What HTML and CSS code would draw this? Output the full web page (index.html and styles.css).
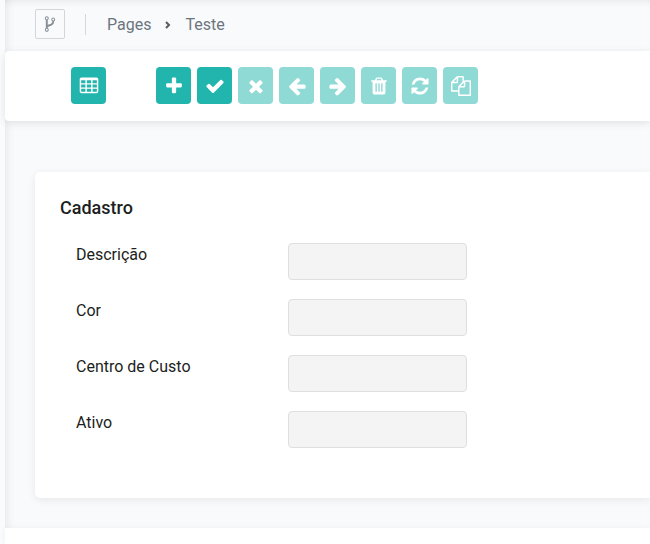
FILE: index.html
```html
<!DOCTYPE html>
<html lang="pt-BR">
<head>
  <meta charset="UTF-8" />
  <meta name="viewport" content="width=device-width, initial-scale=1" />
  <title>Teste</title>
  <link rel="stylesheet" href="styles.css">
</head>
<body>
  <main class="content">
    <header class="page-header">
      <button type="button" class="btn-fork" aria-label="Menu">
        <svg viewBox="0 0 1792 1792"><path d="M672 1472q0-40-28-68t-68-28-68 28-28 68 28 68 68 28 68-28 28-68zm0-1152q0-40-28-68t-68-28-68 28-28 68 28 68 68 28 68-28 28-68zm640 128q0-40-28-68t-68-28-68 28-28 68 28 68 68 28 68-28 28-68zm96 0q0 52-26 96.500t-70 69.500q-2 287-226 414-67 38-203 81-128 40-169.500 71t-41.500 100v26q44 25 70 69.500t26 96.500q0 80-56 136t-136 56-136-56-56-136q0-52 26-96.500t70-69.500v-820q-44-25-70-69.500t-26-96.500q0-80 56-136t136-56 136 56 56 136q0 52-26 96.500t-70 69.500v497q54-26 154-57 55-17 87.500-29.500t70.500-31 59-39.500 40.500-51 28-69.500 8.500-91.500q-44-25-70-69.500t-26-96.500q0-80 56-136t136-56 136 56 56 136z"/></svg>
      </button>
      <nav class="breadcrumb">
        <a href="#">Pages</a>
        <svg class="chevron" viewBox="0 0 10 10"><path d="M3 2l3 3-3 3"/></svg>
        <a href="#">Teste</a>
      </nav>
    </header>

    <div class="toolbar">
      <button type="button" class="btn" aria-label="Tabela">
        <svg viewBox="0 0 1792 1792"><path fill-rule="evenodd" d="M224 128h1344q66 0 113 47t47 113v1088q0 66-47 113t-113 47h-1344q-66 0-113-47t-47-113v-1088q0-66 47-113t113-47zM192 384v256h384v-256zM704 384v256h384v-256zM1216 384v256h384v-256zM192 768v256h384v-256zM704 768v256h384v-256zM1216 768v256h384v-256zM192 1152v224q0 32 32 32h352v-256zM704 1152v256h384v-256zM1216 1152v256h352q32 0 32-32v-224z"/></svg>
      </button>
      <div class="btn-group">
        <button type="button" class="btn" aria-label="Novo">
          <svg viewBox="0 0 1792 1792"><path d="M1600 736v192q0 40-28 68t-68 28h-416v416q0 40-28 68t-68 28h-192q-40 0-68-28t-28-68v-416h-416q-40 0-68-28t-28-68v-192q0-40 28-68t68-28h416v-416q0-40 28-68t68-28h192q40 0 68 28t28 68v416h416q40 0 68 28t28 68z"/></svg>
        </button>
        <button type="button" class="btn" aria-label="Salvar">
          <svg viewBox="0 0 1792 1792"><path d="M1671 566q0 40-28 68l-724 724-136 136q-28 28-68 28t-68-28l-136-136-362-362q-28-28-28-68t28-68l136-136q28-28 68-28t68 28l294 295 656-657q28-28 68-28t68 28l136 136q28 28 28 68z"/></svg>
        </button>
        <button type="button" class="btn" aria-label="Cancelar" disabled>
          <svg viewBox="0 0 1792 1792"><path d="M1490 1322q0 40-28 68l-136 136q-28 28-68 28t-68-28l-294-294-294 294q-28 28-68 28t-68-28l-136-136q-28-28-28-68t28-68l294-294-294-294q-28-28-28-68t28-68l136-136q28-28 68-28t68 28l294 294 294-294q28-28 68-28t68 28l136 136q28 28 28 68t-28 68l-294 294 294 294q28 28 28 68z"/></svg>
        </button>
        <button type="button" class="btn" aria-label="Anterior" disabled>
          <svg viewBox="0 0 1792 1792"><path d="M1664 896v128q0 53-32 90t-85 38h-704l293 294q38 36 38 90t-38 90l-75 76q-37 37-90 37-52 0-91-37l-651-652q-37-37-37-90 0-52 37-91l651-650q38-38 91-38 52 0 90 38l75 74q38 38 38 91t-38 91l-293 293h704q52 0 85 38t32 90z"/></svg>
        </button>
        <button type="button" class="btn" aria-label="Próximo" disabled>
          <svg viewBox="0 0 1792 1792"><path transform="translate(1792 0) scale(-1 1)" d="M1664 896v128q0 53-32 90t-85 38h-704l293 294q38 36 38 90t-38 90l-75 76q-37 37-90 37-52 0-91-37l-651-652q-37-37-37-90 0-52 37-91l651-650q38-38 91-38 52 0 90 38l75 74q38 38 38 91t-38 91l-293 293h704q52 0 85 38t32 90z"/></svg>
        </button>
        <button type="button" class="btn" aria-label="Excluir" disabled>
          <svg viewBox="0 0 1792 1792"><path d="M704 1376v-704q0-14-9-23t-23-9h-64q-14 0-23 9t-9 23v704q0 14 9 23t23 9h64q14 0 23-9t9-23zm256 0v-704q0-14-9-23t-23-9h-64q-14 0-23 9t-9 23v704q0 14 9 23t23 9h64q14 0 23-9t9-23zm256 0v-704q0-14-9-23t-23-9h-64q-14 0-23 9t-9 23v704q0 14 9 23t23 9h64q14 0 23-9t9-23zm-544-992h448l-48-117q-7-9-17-11h-317q-10 2-17 11zm928 32v64q0 14-9 23t-23 9h-96v948q0 83-47 143.500t-113 60.500h-832q-66 0-113-58.500t-47-141.500v-952h-96q-14 0-23-9t-9-23v-64q0-14 9-23t23-9h309l70-167q15-37 54-63t79-26h320q40 0 79 26t54 63l70 167h309q14 0 23 9t9 23z"/></svg>
        </button>
        <button type="button" class="btn" aria-label="Atualizar" disabled>
          <svg viewBox="0 0 1792 1792"><path d="M1639 1056q0 5-1 7-64 268-268 434.500t-478 166.500q-146 0-282.500-55t-243.500-157l-129 129q-19 19-45 19t-45-19-19-45v-448q0-26 19-45t45-19h448q26 0 45 19t19 45-19 45l-137 137q71 66 161 102t187 36q134 0 250-65t186-179q11-17 53-117 8-23 30-23h192q13 0 22.500 9.500t9.500 22.500zm25-800v448q0 26-19 45t-45 19h-448q-26 0-45-19t-19-45 19-45l138-138q-148-137-349-137-134 0-250 65t-186 179q-11 17-53 117-8 23-30 23h-199q-13 0-22.500-9.500t-9.500-22.500v-7q65-268 270-434.500t480-166.500q146 0 284 55.500t245 156.500l130-129q19-19 45-19t45 19 19 45z"/></svg>
        </button>
        <button type="button" class="btn" aria-label="Copiar" disabled>
          <svg viewBox="0 0 1792 1792"><path d="M1696 384q40 0 68 28t28 68v1216q0 40-28 68t-68 28h-960q-40 0-68-28t-28-68v-288h-544q-40 0-68-28t-28-68v-672q0-40 20-88t48-76l408-408q28-28 76-48t88-20h416q40 0 68 28t28 68v328q68-40 128-40h416zm-544 213l-299 299h299v-299zm-640-384l-299 299h299v-299zm196 647l316-316v-416h-384v416q0 40-28 68t-68 28h-416v640h512v-256q0-40 20-88t48-76zm956 804v-1152h-384v416q0 40-28 68t-68 28h-416v640h896z"/></svg>
        </button>
      </div>
    </div>

    <form class="card">
      <h1>Cadastro</h1>
      <div class="form-row">
        <label for="descricao">Descrição</label>
        <input type="text" id="descricao" disabled />
      </div>
      <div class="form-row">
        <label for="cor">Cor</label>
        <input type="text" id="cor" disabled />
      </div>
      <div class="form-row">
        <label for="centro-custo">Centro de Custo</label>
        <input type="text" id="centro-custo" disabled />
      </div>
      <div class="form-row">
        <label for="ativo">Ativo</label>
        <input type="text" id="ativo" disabled />
      </div>
    </form>

    <footer class="page-footer"></footer>
  </main>
</body>
</html>
```
FILE: styles.css
```css
* {
  box-sizing: border-box;
}
body {
  margin: 0;
  padding-left: 5px;
  background: #fafbfc;
  color: #1c1e21;
  font-family: Roboto, "Liberation Sans", sans-serif;
  font-size: 16px;
  line-height: 24px;
}
svg {
  display: block;
  width: 20px;
  height: 20px;
  fill: currentColor;
}
.content {
  display: flex;
  flex-direction: column;
  min-height: 100vh;
  background: #f9fafc;
  box-shadow: inset 8px 0 8px -6px rgba(0, 0, 0, 0.08), inset 0 8px 10px -8px rgba(0, 0, 0, 0.1);
}
.page-header {
  display: flex;
  align-items: center;
  padding: 9px 30px 12px;
}
.btn-fork {
  display: flex;
  align-items: center;
  justify-content: center;
  width: 30px;
  height: 30px;
  padding: 0;
  background: #f9fafb;
  border: 1px solid #d3d6d8;
  border-radius: 2px;
  color: #868e96;
}
.btn-fork svg {
  width: 18px;
  height: 18px;
}
.breadcrumb {
  display: flex;
  align-items: center;
  gap: 12px;
  height: 21px;
  margin-left: 20px;
  padding: 2px 0 0 21px;
  border-left: 1px solid #d5d8db;
}
.breadcrumb a {
  color: #6c757d;
  text-decoration: none;
}
.chevron {
  width: 10px;
  height: 10px;
  fill: none;
  stroke: #555b61;
  stroke-width: 2;
}
.toolbar {
  display: flex;
  gap: 50px;
  padding: 16px 66px 17px;
  background: #fff;
  border-radius: 4px 0 0 4px;
  box-shadow: 0 2px 8px rgba(0, 0, 0, 0.1);
}
.btn-group {
  display: flex;
  gap: 6px;
}
.btn {
  display: flex;
  align-items: center;
  justify-content: center;
  width: 35px;
  height: 37px;
  padding: 0;
  background: #22b5ad;
  border: 0;
  border-radius: 4px;
  color: #fff;
}
.btn:disabled {
  background: #90dad6;
}
.card {
  margin: 51px 0 30px 30px;
  padding: 24px 25px 50px;
  background: #fff;
  border-radius: 5px 0 0 5px;
  box-shadow: 0 2px 8px rgba(0, 0, 0, 0.08);
}
h1 {
  margin: 0 0 23px;
  font-size: 18px;
  font-weight: 500;
  line-height: 24px;
}
.form-row {
  display: grid;
  grid-template-columns: 212px 179px;
  align-items: start;
  margin-bottom: 19px;
  padding-left: 16px;
}
.form-row:last-child {
  margin-bottom: 0;
}
.form-row input {
  width: 100%;
  height: 37px;
  padding: 6px 12px;
  background: #f4f4f4;
  border: 1px solid #dee0e0;
  border-radius: 4px;
  font: inherit;
}
.page-footer {
  flex: 1;
  min-height: 16px;
  background: #fff;
  box-shadow: 0 0 6px rgba(0, 0, 0, 0.05);
}
```
